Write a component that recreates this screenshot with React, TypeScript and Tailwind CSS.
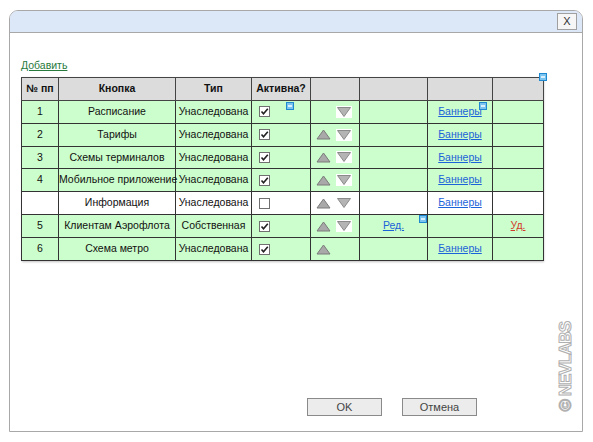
import React from "react";

type Row = {
  num: string;
  name: string;
  type: string;
  active: boolean;
  up: boolean;
  down: boolean;
  edit?: boolean;
  banners?: boolean;
  del?: boolean;
  white?: boolean;
};

const rows: Row[] = [
  { num: "1", name: "Расписание", type: "Унаследована", active: true, up: false, down: true, banners: true },
  { num: "2", name: "Тарифы", type: "Унаследована", active: true, up: true, down: true, banners: true },
  { num: "3", name: "Схемы терминалов", type: "Унаследована", active: true, up: true, down: true, banners: true },
  { num: "4", name: "Мобильное приложение", type: "Унаследована", active: true, up: true, down: true, banners: true },
  { num: "", name: "Информация", type: "Унаследована", active: false, up: true, down: true, banners: true, white: true },
  { num: "5", name: "Клиентам Аэрофлота", type: "Собственная", active: true, up: true, down: true, edit: true, del: true },
  { num: "6", name: "Схема метро", type: "Унаследована", active: true, up: true, down: false, banners: true },
];

function Marker({ className }: { className: string }) {
  return (
    <span
      className={`absolute h-[8px] w-[8px] border border-[#1e88d0] bg-[#7cc4f0] ${className}`}
    >
      <span className="absolute left-[1px] top-[2px] h-[2px] w-[4px] bg-[#d8f0ff]" />
    </span>
  );
}

function Checkbox({ checked }: { checked: boolean }) {
  return (
    <span className="flex h-[11px] w-[11px] items-center justify-center border border-[#707070] bg-white">
      {checked && (
        <svg width="9" height="9" viewBox="0 0 9 9">
          <path d="M1.5 4.5 L3.5 6.8 L7.8 1.8" fill="none" stroke="#222" strokeWidth="1.6" />
        </svg>
      )}
    </span>
  );
}

function UpArrow() {
  return (
    <svg width="15" height="11" viewBox="0 0 15 11">
      <path d="M7.5 1 L14 10 L1 10 Z" fill="#a9a9a9" stroke="#7a7a7a" strokeWidth="1" />
    </svg>
  );
}

function DownArrow() {
  return (
    <svg width="16" height="12" viewBox="0 0 16 12">
      <rect x="0" y="0" width="16" height="12" fill="#ffffff" />
      <path d="M1.5 1.5 L14.5 1.5 L8 10.5 Z" fill="#b4b4b4" stroke="#8a8a8a" strokeWidth="1" />
    </svg>
  );
}

export default function App() {
  return (
    <div className="relative h-[442px] w-[593px] bg-white font-['Liberation_Sans',Arial,sans-serif] text-[10.5px] text-[#111]">
      <div className="absolute left-[9px] top-[10px] flex h-[422px] w-[574px] flex-col overflow-hidden rounded-t-[9px] border border-[#a8a8a8] bg-white">
        <div className="flex h-[22px] items-center justify-end border-b border-[#a8a8a8] bg-[#dce7f7] pr-[5px]">
          <button className="flex h-[17px] w-[20px] items-center justify-center border border-[#a0a0a0] bg-[#f6f6f6] text-[11px] text-[#333]">
            X
          </button>
        </div>

        <div className="relative flex-1 pl-[11px] pt-[25px]">
          <a className="text-[10.5px] text-[#287a3c] underline">Добавить</a>

          <div className="relative mt-[3px] w-[522px] shadow-[1px_1px_2px_rgba(0,0,0,0.25)]">
            <table className="w-[522px] table-fixed border-collapse border border-[#555]">
              <colgroup>
                <col className="w-[37px]" />
                <col className="w-[117px]" />
                <col className="w-[76px]" />
                <col className="w-[59px]" />
                <col className="w-[49px]" />
                <col className="w-[68px]" />
                <col className="w-[65px]" />
                <col className="w-[51px]" />
              </colgroup>
              <thead>
                <tr className="h-[23px] bg-[#dcdcdc]">
                  <th className="border border-[#444] text-center font-bold">№ пп</th>
                  <th className="border border-[#444] text-center font-bold">Кнопка</th>
                  <th className="border border-[#444] text-center font-bold">Тип</th>
                  <th className="border border-[#444] text-center font-bold">Активна?</th>
                  <th className="border border-[#444]" />
                  <th className="border border-[#444]" />
                  <th className="border border-[#444]" />
                  <th className="border border-[#444]" />
                </tr>
              </thead>
              <tbody>
                {rows.map((row, i) => (
                  <tr
                    key={i}
                    className={`h-[22.9px] ${row.white ? "bg-white" : "bg-[#ccfdcc]"}`}
                  >
                    <td className="border border-[#333] text-center">{row.num}</td>
                    <td className="border border-[#333] whitespace-nowrap text-center">{row.name}</td>
                    <td className="border border-[#333] whitespace-nowrap text-center">{row.type}</td>
                    <td className="relative border border-[#333] pl-[7px]">
                      <Checkbox checked={row.active} />
                      {i === 0 && <Marker className="left-[34px] top-[1px]" />}
                    </td>
                    <td className="border border-[#333] pl-[5px]">
                      <div className="flex items-center gap-[5px]">
                        <span className="flex w-[15px] justify-center">{row.up && <UpArrow />}</span>
                        <span className="flex w-[16px] justify-center">{row.down && <DownArrow />}</span>
                      </div>
                    </td>
                    <td className="relative border border-[#333] text-center">
                      {row.edit && <a className="text-[#1b63d8] underline">Ред.</a>}
                      {row.edit && <Marker className="right-[0px] top-[0px]" />}
                    </td>
                    <td className="relative border border-[#333] text-center">
                      {row.banners && <a className="text-[#1b63d8] underline">Баннеры</a>}
                      {i === 0 && <Marker className="right-[5px] top-[1px]" />}
                    </td>
                    <td className="border border-[#333] text-center">
                      {row.del && <a className="text-[#d23a2a] underline">Уд.</a>}
                    </td>
                  </tr>
                ))}
              </tbody>
            </table>
            <Marker className="-right-[4px] -top-[4px]" />
          </div>

          <div className="absolute left-[297px] top-[365px] flex gap-[20px]">
            <button className="h-[18px] w-[75px] border border-[#8a8a8a] bg-[#ececec] text-[11px] text-[#444]">
              OK
            </button>
            <button className="h-[18px] w-[75px] border border-[#8a8a8a] bg-[#ececec] text-[11px] text-[#444]">
              Отмена
            </button>
          </div>

          <div className="absolute left-[548px] top-[287px] flex h-[94px] w-[16px] items-center justify-center">
            <span className="-rotate-90 whitespace-nowrap text-[17px] font-bold tracking-[-1px] text-white [-webkit-text-stroke:1px_#b0b0b0]">
              © NEVLABS
            </span>
          </div>
        </div>
      </div>
    </div>
  );
}
